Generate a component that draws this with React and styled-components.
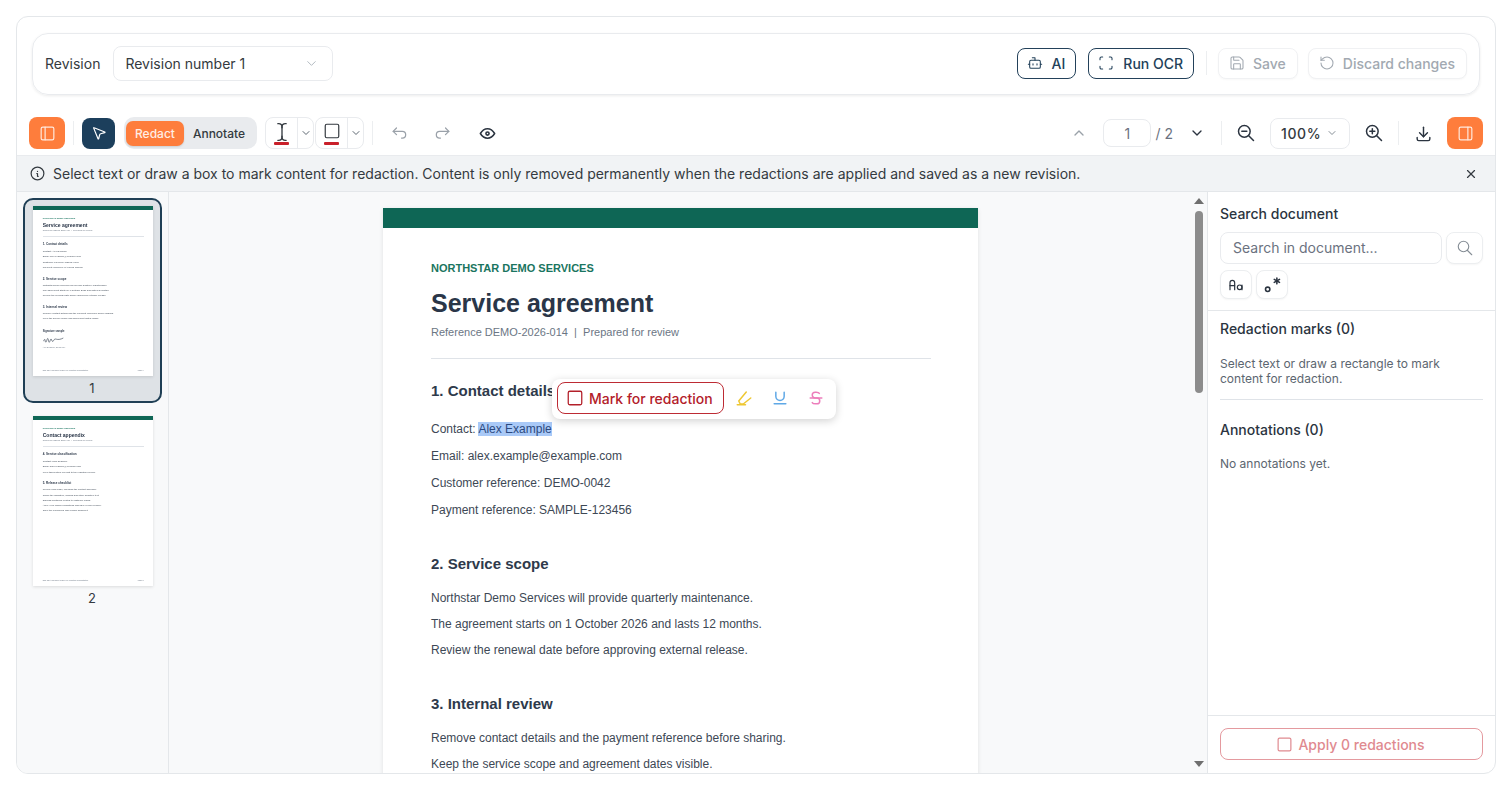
import React from "react";
import styled, { createGlobalStyle } from "styled-components";
import {
  TbArrowBackUp,
  TbArrowForwardUp,
  TbChevronDown,
  TbChevronUp,
  TbDownload,
  TbEye,
  TbInfoCircle,
  TbLayoutSidebar,
  TbLayoutSidebarRight,
  TbLetterCase,
  TbRegex,
  TbSearch,
  TbStrikethrough,
  TbUnderline,
  TbX,
  TbZoomIn,
  TbZoomOut,
} from "react-icons/tb";
import { Bot, MousePointer2, RotateCcw, Save, Scan, Square, TextCursor } from "lucide-react";

const GlobalStyle = createGlobalStyle`
  html, body {
    margin: 0;
    height: 100%;
    background: #fff;
    overflow: hidden;
  }
  body {
    font-family: Inter, "Liberation Sans", sans-serif;
    color: #2b3440;
  }
  * {
    box-sizing: border-box;
  }
`;

const Shell = styled.div`
  margin: 16px;
  width: 1480px;
  height: 758px;
  border: 1px solid #e4e7ea;
  border-radius: 12px;
  display: flex;
  flex-direction: column;
  overflow: hidden;
  background: #fff;
`;

const TopBar = styled.header`
  flex: none;
  margin: 16px 15px 0;
  height: 62px;
  padding: 0 12px 2px 12px;
  border: 1px solid #e9ebee;
  border-radius: 16px;
  box-shadow: 0 1px 3px rgba(0, 0, 0, 0.08);
  display: flex;
  align-items: center;
  gap: 12px;
`;

const RevisionLabel = styled.span`
  font-size: 14px;
  color: #343a40;
  margin-right: 1px;
`;

const RevisionSelect = styled.div`
  width: 220px;
  height: 35px;
  border: 1px solid #e9ebee;
  border-radius: 8px;
  padding: 0 13px 0 11px;
  display: flex;
  align-items: center;
  justify-content: space-between;
  font-size: 14px;
  color: #343a40;
  svg {
    color: #adb5bd;
  }
`;

const Spacer = styled.div`
  flex: 1;
`;

const OutlineButton = styled.button`
  height: 31px;
  padding: 0 10px 0 9px;
  border: 1px solid #23415a;
  border-radius: 8px;
  background: #fff;
  color: #23415a;
  font: 500 14px Inter, sans-serif;
  display: flex;
  align-items: center;
  gap: 9px;
`;

const DisabledButton = styled.button`
  height: 31px;
  padding: 0 11px 0 10px;
  margin-left: ${(p) => p.$ml || 0}px;
  border: 1px solid #f0f1f3;
  border-radius: 8px;
  background: #fff;
  color: #a2a9b1;
  font: 500 14px Inter, sans-serif;
  display: flex;
  align-items: center;
  gap: 8px;
  box-shadow: 0 1px 2px rgba(0, 0, 0, 0.03);
`;

const Divider = styled.span`
  flex: none;
  width: 1px;
  height: 24px;
  background: #eceef0;
`;

const TopDivider = styled(Divider)`
  margin-right: -1px;
`;

const Toolbar = styled.div`
  flex: none;
  height: 60px;
  padding: 22px 12px 6px;
  display: flex;
  align-items: center;
  justify-content: space-between;
`;

const ToolGroup = styled.div`
  display: flex;
  align-items: center;
  gap: ${(p) => p.$gap ?? 8}px;
  margin-left: ${(p) => p.$ml || 0}px;
`;

const OrangeButton = styled.button`
  width: 36px;
  height: 32px;
  border: 0;
  border-radius: 8px;
  background: #fe7d3c;
  color: #ffe9dd;
  padding: 0;
  display: flex;
  align-items: center;
  justify-content: center;
`;

const PointerButton = styled.button`
  width: 33px;
  height: 31px;
  border: 0;
  border-radius: 8px;
  background: #1c3f5c;
  color: #fff;
  padding: 0;
  display: flex;
  align-items: center;
  justify-content: center;
`;

const ModeSwitch = styled.div`
  width: 133px;
  height: 32px;
  border-radius: 10px;
  background: #e9ebee;
  padding: 0 2px;
  display: flex;
  align-items: center;
`;

const ModeOption = styled.span`
  height: 25px;
  border-radius: 7px;
  padding: 0 9px;
  font-size: 12px;
  font-weight: 500;
  display: flex;
  align-items: center;
  color: ${(p) => (p.$active ? "#ffeee5" : "#343a40")};
  background: ${(p) => (p.$active ? "#fe7d3c" : "transparent")};
  box-shadow: ${(p) => (p.$active ? "0 1px 2px rgba(0,0,0,0.12)" : "none")};
`;

const ColorPicker = styled.div`
  width: 49px;
  height: 32px;
  border: 1px solid #e9ebee;
  border-radius: 8px;
  display: flex;
  align-items: stretch;
`;

const ColorSwatch = styled.span`
  flex: 1;
  display: flex;
  flex-direction: column;
  align-items: center;
  justify-content: center;
  color: #343a40;
  border-right: 1px solid #e9ebee;
`;

const ColorBar = styled.i`
  display: block;
  width: 15px;
  height: 3px;
  margin-top: ${(p) => p.$top || 0}px;
  border-radius: 1px;
  background: #c9202a;
`;

const ColorCaret = styled.span`
  width: 15px;
  display: flex;
  align-items: center;
  justify-content: center;
  color: #5c6670;
`;

const IconButton = styled.button`
  width: 32px;
  height: 32px;
  border: 0;
  background: none;
  padding: 0;
  display: flex;
  align-items: center;
  justify-content: center;
  color: ${(p) => (p.$muted ? "#9aa1a9" : "#2b3440")};
`;

const PageInput = styled.div`
  width: 48px;
  height: 28px;
  border: 1px solid #e9ebee;
  border-radius: 8px;
  font-size: 14px;
  color: #6b7280;
  display: flex;
  align-items: center;
  justify-content: center;
`;

const PageTotal = styled.span`
  font-size: 14px;
  color: #6b7280;
  margin-left: -4px;
`;

const ZoomSelect = styled.div`
  width: 80px;
  height: 31px;
  border: 1px solid #e9ebee;
  border-radius: 8px;
  padding-left: 10px;
  display: flex;
  align-items: center;
  gap: 5px;
  font-size: 14px;
  font-weight: 500;
  letter-spacing: 0.6px;
  color: #343a40;
  svg {
    color: #868e96;
  }
`;

const InfoBar = styled.div`
  flex: none;
  height: 37px;
  background: #f1f3f5;
  border-top: 1px solid #e9ebee;
  border-bottom: 1px solid #e4e7ea;
  padding: 0 17px 0 12px;
  display: flex;
  align-items: center;
  gap: 7px;
  font-size: 14px;
  color: #343a40;
  svg {
    flex: none;
  }
`;

const InfoText = styled.span`
  flex: 1;
`;

const Workspace = styled.div`
  flex: 1;
  min-height: 0;
  display: flex;
`;

const ThumbRail = styled.aside`
  flex: none;
  width: 152px;
  border-right: 1px solid #e4e7ea;
  background: #f8f9fa;
  padding: 6px 0 0 6px;
  display: flex;
  flex-direction: column;
  gap: 5px;
`;

const ThumbCard = styled.div`
  width: 139px;
  height: 205px;
  border: 2px solid ${(p) => (p.$active ? "#1f3f55" : "transparent")};
  border-radius: 10px;
  background: ${(p) => (p.$active ? "#dee2e6" : "transparent")};
  padding: 6px 0 0 8px;
`;

const ThumbPage = styled.div`
  width: 120px;
  height: 170px;
  overflow: hidden;
  background: #fff;
  box-shadow: 0 1px 3px rgba(0, 0, 0, 0.12);
`;

const ThumbZoom = styled.div`
  zoom: 0.2017;
  filter: blur(1.2px);
`;

const ThumbLabel = styled.div`
  width: 118px;
  margin-top: 4px;
  text-align: center;
  font-size: 13px;
  line-height: 16px;
  color: #343a40;
`;

const Viewer = styled.main`
  flex: 1;
  min-width: 0;
  background: #f8f9fa;
  overflow: hidden;
  display: flex;
  justify-content: center;
  padding-top: 16px;
`;

const Sheet = styled.article`
  position: relative;
  flex: none;
  width: 595px;
  height: 842px;
  background: #fff;
  box-shadow: 0 1px 4px rgba(0, 0, 0, 0.1);
  font-family: "Liberation Sans", Arial, sans-serif;
  color: #2e3a4b;
  display: flex;
  flex-direction: column;
`;

const Band = styled.div`
  flex: none;
  height: 20px;
  background: #0e6655;
`;

const SheetBody = styled.div`
  flex: 1;
  padding: 33px 47px 24px 48px;
  display: flex;
  flex-direction: column;
`;

const Kicker = styled.div`
  font-size: 11px;
  line-height: 14px;
  font-weight: 700;
  color: #1a7560;
`;

const DocTitle = styled.h1`
  margin: 12px 0 0;
  font-size: 25px;
  line-height: 32px;
  font-weight: 700;
  color: #2a3648;
`;

const DocMeta = styled.div`
  margin-top: 5px;
  font-size: 11px;
  line-height: 16px;
  color: #6b7684;
  white-space: pre;
`;

const Rule = styled.hr`
  margin: 18px 0 22px;
  border: 0;
  border-top: 1px solid #dfe3e8;
  width: 500px;
`;

const SectionTitle = styled.h2`
  margin: ${(p) => p.$top ?? 31}px 0 ${(p) => p.$gap ?? 11}px;
  font-size: 15px;
  line-height: 20px;
  font-weight: 700;
  color: #2e3a4b;
`;

const Line = styled.p`
  margin: 0;
  font-size: 12px;
  line-height: ${(p) => (p.$tall ? 27 : 26)}px;
  color: #3d4855;
`;

const Selected = styled.span`
  background: #a9c9f7;
  color: #2c4a80;
`;

const SignTitle = styled.h3`
  margin: 40px 0 12px;
  font-size: 13px;
  line-height: 18px;
  font-weight: 700;
  color: #2e3a4b;
`;

const SignNote = styled.div`
  margin-top: 10px;
  font-size: 10px;
  color: #6b7684;
`;

const SheetFooter = styled.footer`
  margin-top: auto;
  display: flex;
  justify-content: space-between;
  font-size: 9px;
  color: #6b7684;
`;

const SelectionPopup = styled.div`
  position: absolute;
  left: 169px;
  top: 171px;
  width: 284px;
  height: 40px;
  background: #fff;
  border-radius: 8px;
  box-shadow: 0 2px 8px rgba(0, 0, 0, 0.18);
  padding: 3px 0 0 5px;
  display: flex;
  align-items: flex-start;
  font-family: Inter, sans-serif;
`;

const MarkButton = styled.button`
  width: 167px;
  height: 32px;
  border: 1px solid #bd2b34;
  border-radius: 8px;
  background: #fff;
  color: #b3202a;
  padding: 0 0 0 8px;
  font: 500 14px Inter, sans-serif;
  display: flex;
  align-items: center;
  gap: 5px;
  margin-right: 2px;
`;

const PopupIcon = styled.button`
  width: 36px;
  height: 32px;
  border: 0;
  background: none;
  padding: 0;
  display: flex;
  align-items: center;
  justify-content: center;
  color: ${(p) => p.$color};
`;

const ScrollTrack = styled.div`
  flex: none;
  width: 15px;
  background: #f8f9fa;
  display: flex;
  flex-direction: column;
  align-items: center;
  padding: 6px 1px 6px 0;
`;

const ScrollArrow = styled.i`
  width: 0;
  height: 0;
  border-left: 5px solid transparent;
  border-right: 5px solid transparent;
  ${(p) => (p.$down ? "border-top" : "border-bottom")}: 6px solid #6f6f6f;
`;

const ScrollThumb = styled.div`
  width: 8px;
  height: 182px;
  margin-top: 7px;
  border-radius: 4px;
  background: #8c8c8c;
`;

const ScrollGap = styled.div`
  flex: 1;
`;

const SidePanel = styled.aside`
  flex: none;
  width: 288px;
  border-left: 1px solid #e4e7ea;
  display: flex;
  flex-direction: column;
`;

const SearchBlock = styled.section`
  flex: none;
  height: 119px;
  padding: 13px 12px 0;
  border-bottom: 1px solid #e4e7ea;
`;

const PanelTitle = styled.h4`
  margin: ${(p) => p.$top ?? 0}px 0 0;
  font-size: 14px;
  line-height: 17px;
  font-weight: 500;
  color: #2b3440;
`;

const SearchRow = styled.div`
  margin-top: 10px;
  display: flex;
  gap: 4px;
`;

const SearchInput = styled.div`
  width: 222px;
  height: 32px;
  border: 1px solid #e9ebee;
  border-radius: 8px;
  padding: 0 0 2px 12px;
  font-size: 14px;
  color: #6b7280;
  display: flex;
  align-items: center;
`;

const SquareButton = styled.button`
  width: ${(p) => p.$w || 32}px;
  height: ${(p) => p.$h || 29}px;
  border: 1px solid #eceef0;
  border-radius: 8px;
  background: #fff;
  padding: 0;
  box-shadow: 0 1px 2px rgba(0, 0, 0, 0.04);
  display: flex;
  align-items: center;
  justify-content: center;
  color: ${(p) => p.$color || "#2b3440"};
`;

const OptionRow = styled.div`
  margin-top: 6px;
  display: flex;
  gap: 4px;
`;

const MarksBlock = styled.section`
  flex: 1;
  padding: 9px 12px 0;
`;

const PanelText = styled.p`
  margin: ${(p) => p.$top ?? 0}px 0 0;
  font-size: 12px;
  line-height: 15px;
  color: #5c6670;
`;

const PanelRule = styled.hr`
  margin: 13px 0 0;
  border: 0;
  border-top: 1px solid #dfe3e8;
`;

const ApplyBlock = styled.div`
  flex: none;
  height: 58px;
  border-top: 1px solid #e4e7ea;
  padding: 12px 12px 0;
`;

const ApplyButton = styled.button`
  width: 100%;
  height: 32px;
  border: 1px solid #e49a9f;
  border-radius: 8px;
  background: #fff;
  color: #df8a90;
  padding: 0 2px 0 0;
  font: 500 14px Inter, sans-serif;
  display: flex;
  align-items: center;
  justify-content: center;
  gap: 5px;
`;

function HighlightIcon() {
  return (
    <svg width="18" height="18" viewBox="0 0 24 24" fill="none" stroke="currentColor" strokeWidth="2" strokeLinecap="round" strokeLinejoin="round">
      <path d="M15 4 5 16l2 4h4l10-8" />
      <path d="M3 21h11" />
    </svg>
  );
}

function Signature() {
  return (
    <svg width="110" height="40" viewBox="0 0 110 40" fill="none">
      <path
        d="M3 24c5-10 7-10 8 0s5 8 8-3 6-12 8 0 4 14 8 3 5-12 8-4 6 10 10 2 8-8 14-6 20 2 32-5"
        stroke="#2e3a4b"
        strokeWidth="3"
        strokeLinecap="round"
      />
    </svg>
  );
}

function FirstPage({ full }) {
  return (
    <Sheet>
      <Band />
      <SheetBody>
        <Kicker>NORTHSTAR DEMO SERVICES</Kicker>
        <DocTitle>Service agreement</DocTitle>
        <DocMeta>Reference DEMO-2026-014  |  Prepared for review</DocMeta>
        <Rule />
        <SectionTitle $top={0} $gap={15}>
          1. Contact details
        </SectionTitle>
        <Line $tall>
          Contact: {full ? "Alex Example" : <Selected>Alex Example</Selected>}
        </Line>
        <Line $tall>Email: alex.example@example.com</Line>
        <Line $tall>Customer reference: DEMO-0042</Line>
        <Line $tall>Payment reference: SAMPLE-123456</Line>
        <SectionTitle $top={30}>2. Service scope</SectionTitle>
        <Line>Northstar Demo Services will provide quarterly maintenance.</Line>
        <Line>The agreement starts on 1 October 2026 and lasts 12 months.</Line>
        <Line>Review the renewal date before approving external release.</Line>
        <SectionTitle>3. Internal review</SectionTitle>
        <Line>Remove contact details and the payment reference before sharing.</Line>
        <Line>Keep the service scope and agreement dates visible.</Line>
        {full && (
          <>
            <SignTitle>Signature sample</SignTitle>
            <Signature />
            <SignNote>Alex Example, demo only</SignNote>
            <SheetFooter>
              <span>NOT REAL INFORMATION. For redaction demonstration.</span>
              <span>Page 1</span>
            </SheetFooter>
          </>
        )}
      </SheetBody>
      {!full && (
        <SelectionPopup>
          <MarkButton>
            <Square size={18} strokeWidth={1.7} />
            Mark for redaction
          </MarkButton>
          <PopupIcon $color="#eec732">
            <HighlightIcon />
          </PopupIcon>
          <PopupIcon $color="#5fa8e6">
            <TbUnderline size={20} strokeWidth={1.8} />
          </PopupIcon>
          <PopupIcon $color="#ec7dbb">
            <TbStrikethrough size={20} strokeWidth={1.8} />
          </PopupIcon>
        </SelectionPopup>
      )}
    </Sheet>
  );
}

function SecondPage() {
  return (
    <Sheet>
      <Band />
      <SheetBody>
        <Kicker>NORTHSTAR DEMO SERVICES</Kicker>
        <DocTitle>Contact appendix</DocTitle>
        <DocMeta>Reference DEMO-2026-014  |  Prepared for review</DocMeta>
        <Rule />
        <SectionTitle $top={0} $gap={15}>
          4. Service classification
        </SectionTitle>
        <Line $tall>Contact: Sam Example</Line>
        <Line $tall>Email: sam.example@example.com</Line>
        <Line $tall>Keep this section relevant to the redaction review.</Line>
        <SectionTitle $top={30}>5. Release checklist</SectionTitle>
        <Line>Review each page, checking the contact appendix.</Line>
        <Line>Check the signature, images and other sensitive text.</Line>
        <Line>Discuss identifiers related to customer cases.</Line>
        <Line>Apply your chosen redactions and save a new revision.</Line>
        <Line>Save the uncropped PDF before sharing it.</Line>
        <SheetFooter>
          <span>NOT REAL INFORMATION. For redaction demonstration.</span>
          <span>Page 2</span>
        </SheetFooter>
      </SheetBody>
    </Sheet>
  );
}

export default function App() {
  return (
    <>
      <GlobalStyle />
      <Shell>
        <TopBar>
          <RevisionLabel>Revision</RevisionLabel>
          <RevisionSelect>
            Revision number 1
            <TbChevronDown size={15} strokeWidth={1.5} />
          </RevisionSelect>
          <Spacer />
          <OutlineButton>
            <Bot size={16} strokeWidth={1.6} />
            AI
          </OutlineButton>
          <OutlineButton>
            <Scan size={16} strokeWidth={1.6} />
            Run OCR
          </OutlineButton>
          <TopDivider />
          <DisabledButton>
            <Save size={16} strokeWidth={1.6} />
            Save
          </DisabledButton>
          <DisabledButton $ml={-2}>
            <RotateCcw size={16} strokeWidth={1.6} />
            Discard changes
          </DisabledButton>
        </TopBar>

        <Toolbar>
          <ToolGroup>
            <OrangeButton>
              <TbLayoutSidebar size={19} strokeWidth={1.5} />
            </OrangeButton>
            <Divider />
            <ToolGroup $gap={9}>
              <PointerButton>
                <MousePointer2 size={16} strokeWidth={1.8} />
              </PointerButton>
              <ModeSwitch>
                <ModeOption $active>Redact</ModeOption>
                <ModeOption>Annotate</ModeOption>
              </ModeSwitch>
            </ToolGroup>
            <ToolGroup $gap={1}>
              <ColorPicker>
                <ColorSwatch>
                  <TextCursor size={20} strokeWidth={1.6} />
                  <ColorBar />
                </ColorSwatch>
                <ColorCaret>
                  <TbChevronDown size={12} />
                </ColorCaret>
              </ColorPicker>
              <ColorPicker>
                <ColorSwatch>
                  <Square size={18} strokeWidth={1.6} />
                  <ColorBar $top={2} />
                </ColorSwatch>
                <ColorCaret>
                  <TbChevronDown size={12} />
                </ColorCaret>
              </ColorPicker>
            </ToolGroup>
            <Divider />
            <ToolGroup $gap={12} $ml={2}>
              <IconButton $muted>
                <TbArrowBackUp size={20} strokeWidth={1.5} />
              </IconButton>
              <IconButton $muted>
                <TbArrowForwardUp size={20} strokeWidth={1.5} />
              </IconButton>
              <IconButton>
                <TbEye size={19} />
              </IconButton>
            </ToolGroup>
          </ToolGroup>

          <ToolGroup>
            <IconButton $muted>
              <TbChevronUp size={16} />
            </IconButton>
            <PageInput>1</PageInput>
            <PageTotal>/ 2</PageTotal>
            <IconButton>
              <TbChevronDown size={16} />
            </IconButton>
            <Divider />
            <IconButton>
              <TbZoomOut size={20} strokeWidth={1.8} />
            </IconButton>
            <ZoomSelect>
              100%
              <TbChevronDown size={12} />
            </ZoomSelect>
            <IconButton>
              <TbZoomIn size={20} strokeWidth={1.8} />
            </IconButton>
            <Divider />
            <IconButton>
              <TbDownload size={19} strokeWidth={1.8} />
            </IconButton>
            <OrangeButton>
              <TbLayoutSidebarRight size={19} strokeWidth={1.5} />
            </OrangeButton>
          </ToolGroup>
        </Toolbar>

        <InfoBar>
          <TbInfoCircle size={17} strokeWidth={1.7} />
          <InfoText>
            Select text or draw a box to mark content for redaction. Content is only removed
            permanently when the redactions are applied and saved as a new revision.
          </InfoText>
          <TbX size={14} />
        </InfoBar>

        <Workspace>
          <ThumbRail>
            <ThumbCard $active>
              <ThumbPage>
                <ThumbZoom>
                  <FirstPage full />
                </ThumbZoom>
              </ThumbPage>
              <ThumbLabel>1</ThumbLabel>
            </ThumbCard>
            <ThumbCard>
              <ThumbPage>
                <ThumbZoom>
                  <SecondPage />
                </ThumbZoom>
              </ThumbPage>
              <ThumbLabel>2</ThumbLabel>
            </ThumbCard>
          </ThumbRail>

          <Viewer>
            <FirstPage />
          </Viewer>

          <ScrollTrack>
            <ScrollArrow />
            <ScrollThumb />
            <ScrollGap />
            <ScrollArrow $down />
          </ScrollTrack>

          <SidePanel>
            <SearchBlock>
              <PanelTitle>Search document</PanelTitle>
              <SearchRow>
                <SearchInput>Search in document...</SearchInput>
                <SquareButton $w={37} $h={32} $color="#868e96">
                  <TbSearch size={18} strokeWidth={1.5} />
                </SquareButton>
              </SearchRow>
              <OptionRow>
                <SquareButton>
                  <TbLetterCase size={16} strokeWidth={1.8} />
                </SquareButton>
                <SquareButton>
                  <TbRegex size={21} strokeWidth={1.8} />
                </SquareButton>
              </OptionRow>
            </SearchBlock>
            <MarksBlock>
              <PanelTitle>Redaction marks (0)</PanelTitle>
              <PanelText $top={19}>
                Select text or draw a rectangle to mark content for redaction.
              </PanelText>
              <PanelRule />
              <PanelTitle $top={21}>Annotations (0)</PanelTitle>
              <PanelText $top={18}>No annotations yet.</PanelText>
            </MarksBlock>
            <ApplyBlock>
              <ApplyButton>
                <Square size={17} strokeWidth={1.7} />
                Apply 0 redactions
              </ApplyButton>
            </ApplyBlock>
          </SidePanel>
        </Workspace>
      </Shell>
    </>
  );
}
